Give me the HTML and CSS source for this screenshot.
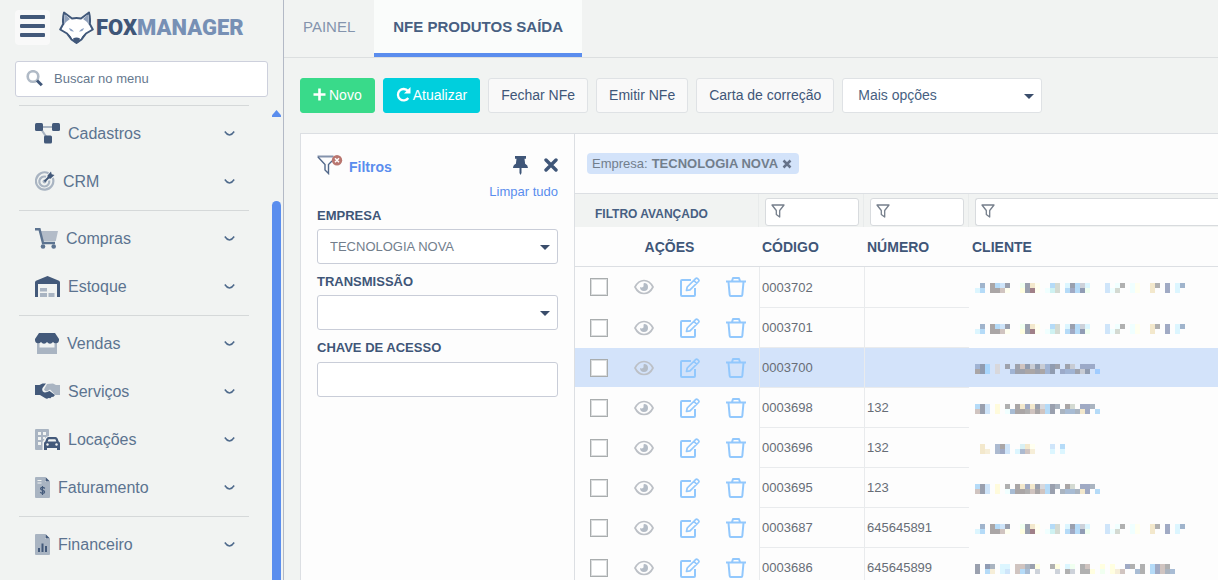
FILE: index.html
```html
<!DOCTYPE html>
<html lang="pt-BR">
<head>
    <meta charset="UTF-8">
    <meta name="viewport" content="width=device-width, initial-scale=1.0">
    <title>FoxManager - NFe Produtos Saída</title>
    <link rel="stylesheet" href="styles.css">
</head>
<body>

    <!-- shared icons -->
    <svg class="sprite" aria-hidden="true">
        <symbol id="chevron" viewBox="0 0 11 7"><path d="M.8 1.500q2.200 3.300 4.700 3.500Q8 4.800 10.200 1.500" fill="none" stroke="#4f6a8c" stroke-width="1.500"/></symbol>
        <symbol id="funnel" viewBox="0 0 14 14"><path d="M1 1h12L8.700 6.500V13L5.300 10.500v-4z" fill="none" stroke="#767f8c" stroke-width="1.300" stroke-linejoin="round"/></symbol>
        <symbol id="eye" viewBox="0 0 20 16">
            <path d="M1 8C3 4 6.200 1.500 10 1.500S17 4 19 8c-2 4-5.200 6.500-9 6.500S3 12 1 8z" fill="none" stroke="#bcc0c6" stroke-width="1.700"/>
            <path d="M10 4a4 4 0 1 1-4 4c.4.500 2.600.600 3.300-.3C10 6.800 9 5 10 4z" fill="#b4bcc6"/>
        </symbol>
        <symbol id="edit" viewBox="0 0 20 20" fill="none" stroke="#92c8fd">
            <path d="M11 3H2Q1 3 1 4v14q0 1 1 1h12q1 0 1-1v-7" stroke-width="2"/>
            <path d="M6.500 13.500l.7-3.500L15.600 1.600q1-1 2 0l.9.9q1 1 0 2L10 12.900zM14 3.500l2.800 2.800" stroke-width="1.700" stroke-linejoin="round"/>
        </symbol>
        <symbol id="trash" viewBox="0 0 20 20" fill="none" stroke="#92c8fd" stroke-width="2">
            <path d="M0 4.500h20M6 4l1-3h6l1 3M2.500 5l1.200 13q.1 1 1 1h10.600q.9 0 1-1L17.500 5" stroke-linejoin="round"/>
        </symbol>

        <!-- masked customer names, one unit per block -->
        <symbol id="mask-a" viewBox="0 0 42 2">
            <path fill="#a0b4cc" d="M1 0h1v1h-1zM41 0h1v1h-1z"/>
            <path fill="#aaa6a6" d="M3 0h1v1h1v1h-2z"/>
            <path fill="#b5dbf8" d="M4 0h1v1h-1zM1 1h1v1h-1zM15 0h1v1h-1zM18 1h1v1h-1zM20 0h1v2h-1z"/>
            <path fill="#cfe5fa" d="M5 0h1v1h-1zM26 0h1v2h-1z"/>
            <path fill="#9aa0ae" d="M6 0h1v1h-1zM10 0h1v2h-1zM19 0h1v1h-1z"/>
            <path fill="#d0c4c0" d="M5 1h1v1h-1z"/>
            <path fill="#f3e8cc" d="M11 0h1v1h-1zM35 0h1v2h-1z"/>
            <path fill="#a08088" d="M11 1h1v1h-1z"/>
            <path fill="#d4dad2" d="M16 0h1v2h-1zM28 1h1v1h-1z"/>
            <path fill="#cff2f2" d="M15 1h1v1h-1z"/>
            <path fill="#cdd2da" d="M21 0h1v1h-1z"/>
            <path fill="#909cb4" d="M21 1h1v1h-1z"/>
            <path fill="#a0aac4" d="M19 1h1v1h-1zM38 0h1v2h-1z"/>
            <path fill="#b0b0b0" d="M29 0h1v1h-1zM36 0h1v1h-1z"/>
            <path fill="#dcf6ff" d="M0 1h1v1h-1zM18 0h1v1h-1zM22 0h1v1h-1zM40 0h1v2h-1z"/>
            <path fill="#f0ffff" d="M14 1h1v1h-1zM27 1h1v1h-1zM28 0h1v1h-1zM31 0h1v2h-1z"/>
            <path fill="#fffff0" d="M6 1h1v1h-1zM12 0h1v2h-1zM32 0h1v2h-1z"/>
            <path fill="#fffee0" d="M9 1h1v1h-1z"/>
            <path fill="#f0fff0" d="M9 0h1v1h-1zM22 1h1v1h-1z"/>
        </symbol>
        <symbol id="mask-b" viewBox="0 0 42 2">
            <path fill="#b5dbf8" d="M0 0h1v1h-1zM14 0h1v2h-1zM24 1h1v1h-1z"/>
            <path fill="#9aa0ae" d="M1 0h1v2h-1zM12 0h1v1h-1zM15 0h1v2h-1z"/>
            <path fill="#cfe5fa" d="M2 0h1v2h-1z"/>
            <path fill="#fffbdc" d="M4 0h1v2h-1z"/>
            <path fill="#b0b0b0" d="M6 0h1v1h-1zM10 1h1v1h-1z"/>
            <path fill="#f0ffff" d="M6 1h1v1h-1z"/>
            <path fill="#aaa6a6" d="M8 0h1v1h1v1h-2zM12 1h1v1h-1zM18 0h1v1h-1z"/>
            <path fill="#f3e8cc" d="M9 0h1v1h-1zM11 0h1v1h-1zM21 1h1v1h-1z"/>
            <path fill="#d0c4c0" d="M0 1h1v1h-1zM11 1h1v1h-1zM13 1h1v1h-1z"/>
            <path fill="#a0aac4" d="M10 0h1v1h-1zM21 0h2v1h-2zM22 1h1v1h-1z"/>
            <path fill="#d8d8dc" d="M13 0h1v1h-1z"/>
            <path fill="#aab4c0" d="M16 0h1v1h-1zM17 1h1v1h-1zM20 1h1v1h-1zM23 0h1v1h-1z"/>
            <path fill="#a8bcd4" d="M7 1h1v1h-1zM18 1h2v1h-2z"/>
            <path fill="#d4dad2" d="M19 0h1v1h-1z"/>
        </symbol>
        <symbol id="mask-c" viewBox="0 0 42 2">
            <path fill="#a0b4d4" d="M0 0h1v1h-1zM7 1h1v1h-1zM14 0h1v2h-1zM18 1h2v1h-2z"/>
            <path fill="#909cb0" d="M1 0h1v2h-1zM10 0h1v1h-1zM12 0h1v1h-1zM15 0h1v2h-1zM22 1h1v1h-1z"/>
            <path fill="#a8d6fd" d="M2 0h1v2h-1z"/>
            <path fill="#d8d8dc" d="M4 0h1v2h-1z"/>
            <path fill="#9ea2ac" d="M6 0h1v1h-1zM8 0h1v1h1v1h-2zM12 1h1v1h-1zM16 0h1v1h-1zM18 0h1v1h-1zM20 1h1v1h-1z"/>
            <path fill="#aaa6a6" d="M0 1h1v1h-1zM10 1h2v1h-2zM13 1h1v1h-1z"/>
            <path fill="#d0c4c0" d="M9 0h1v1h-1z"/>
            <path fill="#c8ccd4" d="M11 0h1v1h-1zM13 0h1v1h-1zM19 0h1v1h-1zM21 1h1v1h-1z"/>
            <path fill="#9caac8" d="M17 1h1v1h-1zM21 0h3v1h-3z"/>
            <path fill="#a0ccff" d="M24 1h1v1h-1z"/>
        </symbol>
        <symbol id="mask-d" viewBox="0 0 42 2">
            <path fill="#f3e8cc" d="M1 0h1v2h-1zM10 0h1v1h-1z"/>
            <path fill="#f6eed8" d="M2 1h1v1h-1zM11 1h1v1h-1z"/>
            <path fill="#acbad0" d="M4 0h1v2h-1zM9 1h1v1h-1z"/>
            <path fill="#aaa6a6" d="M5 0h1v1h-1z"/>
            <path fill="#a0aac4" d="M5 1h1v1h-1z"/>
            <path fill="#cfe5fa" d="M6 0h1v2h-1zM15 0h1v1h-1z"/>
            <path fill="#d8f0f4" d="M9 0h1v1h-1z"/>
            <path fill="#d0c4c0" d="M10 1h1v1h-1z"/>
            <path fill="#fffff0" d="M11 0h1v1h-1z"/>
            <path fill="#b5dbf8" d="M17 0h1v1h-1z"/>
            <path fill="#dcf6ff" d="M8 1h1v1h-1zM15 1h1v1h-1zM17 1h1v1h-1z"/>
        </symbol>
        <symbol id="mask-e" viewBox="0 0 42 2">
            <path fill="#9aa0ae" d="M0 0h1v2h-1zM11 0h1v1h-1z"/>
            <path fill="#909cb4" d="M2 0h1v1h-1z"/>
            <path fill="#aab4c0" d="M3 0h1v1h-1zM10 0h1v1h-1zM38 1h1v1h-1z"/>
            <path fill="#b5dbf8" d="M2 1h1v1h-1zM9 1h1v1h-1zM35 0h1v2h-1z"/>
            <path fill="#f6eed8" d="M3 1h1v1h-1zM28 1h1v1h-1z"/>
            <path fill="#dcf6ff" d="M5 0h2v1h-1v1h-1zM18 0h1v1h-1z"/>
            <path fill="#cfe5fa" d="M6 1h1v1h-1z"/>
            <path fill="#d0c4c0" d="M8 0h2v1h-1v1h-1zM22 0h1v1h-1zM29 1h1v1h-1zM37 0h1v2h-1z"/>
            <path fill="#a8bcd4" d="M10 1h1v1h-1zM32 1h1v1h-1zM39 1h1v1h-1z"/>
            <path fill="#cdd2da" d="M12 1h1v1h-1zM16 1h1v1h-1zM19 1h1v1h-1z"/>
            <path fill="#b0b0b0" d="M15 0h1v1h-1zM18 1h1v1h-1zM21 0h1v2h-1zM22 1h1v1h-1zM31 0h1v1h-1zM33 0h1v2h-1zM38 0h1v1h-1z"/>
            <path fill="#fffee0" d="M12 0h1v1h-1zM16 0h1v1h-1zM23 1h1v1h-1zM25 0h1v1h-1zM27 0h1v2h-1z"/>
            <path fill="#f0fff0" d="M19 0h1v1h-1zM25 1h1v1h-1z"/>
            <path fill="#a0aac4" d="M30 0h1v1h-1zM36 0h1v2h-1z"/>
        </symbol>
    </svg>

    <aside class="sidebar">
        <div class="brand">
            <button class="menu-toggle" type="button" aria-label="Menu">
                <span></span><span></span><span></span>
            </button>
            <a class="logo" href="#">
                <svg width="35" height="33" viewBox="0 0 35 33" aria-hidden="true">
                    <path d="M5 1.500Q3.500 7 4.200 13L1.200 18.500 8 22.500l4.500 6 5 3.500 5-3.500 4.500-6 6.800-4-3-5.500Q31.500 7 30 1.500L22 7.500q-4.500-1-9 0z" fill="#fff" stroke="#41587a" stroke-width="2" stroke-linejoin="round"/>
                    <path d="M5.500 3L11 8l-4 3-2 3zM29.500 3L24 8l4 3 2 3z" fill="#8fa0ba"/>
                    <path d="M10 17q3 .5 5 3.500-4 .5-5-3.500zM25 17q-3 .5-5 3.500 4 .5 5-3.500z" fill="#8ba0c2"/>
                    <path d="M8 22.500q3 .5 5 5.500l1.500 2-2-1zM27 22.500q-3 .5-5 5.500l-1.500 2 2-1z" fill="#41587a"/>
                    <path d="M14 27.500q3.500-2 7 0L20 31l-2.500 1.500L15 31z" fill="#41587a"/>
                </svg>
                <span class="logo-fox">FOX</span><span class="logo-manager">MANAGER</span>
            </a>
        </div>

        <label class="menu-search">
            <svg width="17" height="17" viewBox="0 0 17 17" aria-hidden="true">
                <circle cx="7" cy="6.500" r="5.300" fill="none" stroke="#b0bac6" stroke-width="2.600"/>
                <path d="M11 10.500l4.800 4.800" stroke="#41587a" stroke-width="3"/>
            </svg>
            <input type="text" placeholder="Buscar no menu" aria-label="Buscar no menu">
        </label>

        <div class="menu-area">
            <nav class="menu">
                <hr>
                <a href="#">
                    <svg width="25" height="21" viewBox="0 0 25 21"><path d="M7 4h11M6 6l6 9" stroke="#a9b4c2" stroke-width="2.200" fill="none"/><g fill="#43597a"><rect width="8" height="8" rx="1.500"/><rect x="17" width="8" height="8" rx="1.500"/><rect x="9" y="12.500" width="8" height="8" rx="1.500"/></g></svg>
                    <span>Cadastros</span><svg class="chevron"><use href="#chevron"/></svg>
                </a>
                <a href="#">
                    <svg width="20" height="20" viewBox="0 0 20 20"><g fill="none" stroke="#a9b4c2" stroke-width="2.200"><path d="M13.500 2.200A8.700 8.700 0 1 0 17.800 7"/><path d="M11 5.800a5 5 0 1 0 3.200 3.700"/></g><circle cx="9.500" cy="10.500" r="2" fill="#a9b4c2"/><path d="M9.500 10.500l5-5" stroke="#43597a" stroke-width="2"/><path d="M12.500 4.500L16 .5l.7 2.800 2.800.7-4 3.700-2.800-.4z" fill="#43597a"/></svg>
                    <span>CRM</span><svg class="chevron"><use href="#chevron"/></svg>
                </a>
                <hr>
                <a href="#">
                    <svg width="23" height="21" viewBox="0 0 23 21"><path d="M5.500 3H23l-2.200 10H7.500z" fill="#b3bcc8"/><path d="M0 1.300h4.500L8 15h12" fill="none" stroke="#5c7390" stroke-width="2.400"/><circle cx="8" cy="18.500" r="2.300" fill="#5c7390"/><circle cx="18.700" cy="18.500" r="2.300" fill="#5c7390"/></svg>
                    <span>Compras</span><svg class="chevron"><use href="#chevron"/></svg>
                </a>
                <a href="#">
                    <svg width="25" height="21" viewBox="0 0 25 21"><path d="M0 21V6.500q0-1.200 1-1.700L12.500 0 24 4.800q1 .5 1 1.700V21h-3V8H3v13z" fill="#43597a"/><path d="M5 12h7v3.500H5zM5 17h7v4H5zM13.500 17h6v4h-6z" fill="#a9b4c2"/></svg>
                    <span>Estoque</span><svg class="chevron"><use href="#chevron"/></svg>
                </a>
                <hr>
                <a href="#">
                    <svg width="24" height="21" viewBox="0 0 24 21"><path d="M2 9h2.500v5.500h15V9H22v12H2z" fill="#a9b4c2"/><path d="M4 0h16l4 6q.3 4-3 4.200-2 .1-3-1.200-1.200 1.700-3 1.700T12 9q-1.200 1.700-3 1.700T6 9q-1 1.300-3 1.200Q-.3 10 0 6z" fill="#43597a"/></svg>
                    <span>Vendas</span><svg class="chevron"><use href="#chevron"/></svg>
                </a>
                <a href="#">
                    <svg width="25" height="16" viewBox="0 0 25 16"><path d="M12 1l6-.5L21 2h4v10h-4.500L15 6.500 12.500 8q-2.500 1-3.500-1.500z" fill="#a9b4c2"/><path d="M0 2h4.500L7.500.5h3.500L7.500 5q-1 3.500 1.500 4.300 2.500.4 5.500-1.300l5.500 4-1.500 1.800-2 .2-1 1.300-2-.3Q12 16.500 10 15l-5-3H0z" fill="#43597a"/></svg>
                    <span>Serviços</span><svg class="chevron"><use href="#chevron"/></svg>
                </a>
                <a href="#">
                    <svg width="25" height="21" viewBox="0 0 25 21"><path d="M1 0h12q1 0 1 1v6q-3.500.3-4.500 3L7.500 13v8H1q-1 0-1-1V1q0-1 1-1z" fill="#a9b4c2"/><path d="M3 3h3v3H3zM8 3h3v3H8zM3 8h3v3H3zM8 8h2v2H8zM3 13h3v3H3z" fill="#f1f3f2"/><path d="M13.500 8h7q1.500 0 2.200 1.700l1 2.800q1.300.5 1.300 2V21h-3v-2H12v2H9v-6.500q0-1.500 1.300-2l1-2.800Q12 8 13.500 8z" fill="#43597a"/><path d="M14 10.200h6q.6 0 .9 1l.4 1.300h-8.600l.4-1.300q.3-1 .9-1z" fill="#f1f3f2"/><circle cx="12.500" cy="15.500" r="1.200" fill="#f1f3f2"/><circle cx="21.500" cy="15.500" r="1.200" fill="#f1f3f2"/></svg>
                    <span>Locações</span><svg class="chevron"><use href="#chevron"/></svg>
                </a>
                <a href="#">
                    <svg width="15" height="21" viewBox="0 0 15 21"><path d="M1 0h9v5h5v15q0 1-1 1H1q-1 0-1-1V1q0-1 1-1z" fill="#a9b4c2"/><path d="M10.500 0L15 4.500h-4.500z" fill="#43597a"/><path d="M2.500 3.500h4M2.500 6h4" stroke="#f1f3f2"/><path d="M9.800 11.500q-1-1.200-2.500-1.100-1.700.1-1.700 1.400 0 1.100 2 1.500t2 1.600q0 1.400-2 1.400-1.500 0-2.400-1.200M7.500 9v9" fill="none" stroke="#43597a" stroke-width="1.200"/></svg>
                    <span>Faturamento</span><svg class="chevron"><use href="#chevron"/></svg>
                </a>
                <hr>
                <a href="#">
                    <svg width="15" height="21" viewBox="0 0 15 21"><path d="M1 0h9v5h5v15q0 1-1 1H1q-1 0-1-1V1q0-1 1-1z" fill="#a9b4c2"/><path d="M10.500 0L15 4.500h-4.500zM3 14h2v4H3zM6.500 9.500h2V18h-2zM10 12h2v6h-2z" fill="#43597a"/></svg>
                    <span>Financeiro</span><svg class="chevron"><use href="#chevron"/></svg>
                </a>
            </nav>
            <div class="scroll-track">
                <div class="scroll-up"></div>
                <div class="scroll-thumb"></div>
            </div>
        </div>
    </aside>

    <main class="content">
        <nav class="tabs">
            <a href="#">PAINEL</a>
            <a href="#" class="active">NFE PRODUTOS SAÍDA</a>
        </nav>

        <div class="toolbar">
            <button class="btn btn-new" type="button">
                <svg width="13" height="13" viewBox="0 0 13 13" aria-hidden="true"><path d="M6.500 .5v12M.5 6.500h12" stroke="#fff" stroke-width="2.600"/></svg>
                Novo
            </button>
            <button class="btn btn-refresh" type="button">
                <svg width="15" height="15" viewBox="0 0 15 15" aria-hidden="true"><path d="M12 4A5.700 5.700 0 1 0 12.300 11" fill="none" stroke="#fff" stroke-width="2.300"/><path d="M14.500 0v6.500H8z" fill="#fff"/></svg>
                Atualizar
            </button>
            <button class="btn" type="button">Fechar NFe</button>
            <button class="btn" type="button">Emitir NFe</button>
            <button class="btn" type="button">Carta de correção</button>
            <div class="select more-options">
                <select aria-label="Mais opções"><option>Mais opções</option></select>
            </div>
        </div>

        <div class="panel">
            <section class="filters">
                <div class="filters-head">
                    <svg width="26" height="20" viewBox="0 0 26 20" aria-hidden="true"><path d="M.5 1.500h16" stroke="#8493ac" stroke-width="2"/><path d="M1 2l7 7.500V15l3.500 3.500v-9L15 6" fill="none" stroke="#52688a" stroke-width="1.400"/><circle cx="20" cy="5.300" r="5.200" fill="#b9766f"/><path d="M18 3.300l4 4M22 3.300l-4 4" stroke="#fff" stroke-width="1.500"/></svg>
                    <h2>Filtros</h2>
                    <button class="icon-btn" type="button" aria-label="Fixar">
                        <svg width="15" height="19" viewBox="0 0 15 19"><path d="M2 0h11v2.700h-1.500l.6 5Q15 9 15 12H8.500v5L7.500 19l-1-2v-5H0q0-3 2.900-4.300l.6-5H2z" fill="#3f5678"/></svg>
                    </button>
                    <button class="icon-btn" type="button" aria-label="Fechar">
                        <svg width="14" height="14" viewBox="0 0 14 14"><path d="M2 2l10 10M12 2L2 12" stroke="#3f5678" stroke-width="3.400" stroke-linecap="round"/></svg>
                    </button>
                </div>
                <a class="clear" href="#">Limpar tudo</a>

                <label for="empresa">EMPRESA</label>
                <div class="select">
                    <select id="empresa"><option>TECNOLOGIA NOVA</option></select>
                </div>
                <label for="transmissao">TRANSMISSÃO</label>
                <div class="select">
                    <select id="transmissao"><option></option></select>
                </div>
                <label for="chave">CHAVE DE ACESSO</label>
                <input id="chave" type="text">
            </section>

            <section class="results">
                <div class="chips">
                    <span class="chip">Empresa: <b>TECNOLOGIA NOVA</b>
                        <button class="icon-btn" type="button" aria-label="Remover filtro">
                            <svg width="10" height="10" viewBox="0 0 10 10"><path d="M1.500 1.500l7 7M8.500 1.500l-7 7" stroke="#66738a" stroke-width="2.500"/></svg>
                        </button>
                    </span>
                </div>

                <table>
                    <colgroup>
                        <col class="col-actions">
                        <col class="col-code">
                        <col class="col-code">
                        <col>
                    </colgroup>
                    <thead>
                        <tr class="filter-row">
                            <th>FILTRO AVANÇADO</th>
                            <td><label class="cell-filter"><svg><use href="#funnel"/></svg><input type="text" aria-label="Filtrar código"></label></td>
                            <td><label class="cell-filter"><svg><use href="#funnel"/></svg><input type="text" aria-label="Filtrar número"></label></td>
                            <td><label class="cell-filter wide"><svg><use href="#funnel"/></svg><input type="text" aria-label="Filtrar cliente"></label></td>
                        </tr>
                        <tr class="title-row">
                            <th>AÇÕES</th>
                            <th>CÓDIGO</th>
                            <th>NÚMERO</th>
                            <th>CLIENTE</th>
                        </tr>
                    </thead>
                    <tbody>
                        <tr>
                            <td><div class="actions">
                                <input type="checkbox" aria-label="Selecionar 0003702">
                                <button type="button" aria-label="Ver"><svg class="eye"><use href="#eye"/></svg></button>
                                <button type="button" aria-label="Editar"><svg><use href="#edit"/></svg></button>
                                <button type="button" aria-label="Excluir"><svg><use href="#trash"/></svg></button>
                            </div></td>
                            <td>0003702</td><td></td><td><svg class="mask"><use href="#mask-a"/></svg></td>
                        </tr>
                        <tr>
                            <td><div class="actions">
                                <input type="checkbox" aria-label="Selecionar 0003701">
                                <button type="button" aria-label="Ver"><svg class="eye"><use href="#eye"/></svg></button>
                                <button type="button" aria-label="Editar"><svg><use href="#edit"/></svg></button>
                                <button type="button" aria-label="Excluir"><svg><use href="#trash"/></svg></button>
                            </div></td>
                            <td>0003701</td><td></td><td><svg class="mask"><use href="#mask-a"/></svg></td>
                        </tr>
                        <tr class="selected">
                            <td><div class="actions">
                                <input type="checkbox" aria-label="Selecionar 0003700">
                                <button type="button" aria-label="Ver"><svg class="eye"><use href="#eye"/></svg></button>
                                <button type="button" aria-label="Editar"><svg><use href="#edit"/></svg></button>
                                <button type="button" aria-label="Excluir"><svg><use href="#trash"/></svg></button>
                            </div></td>
                            <td>0003700</td><td></td><td><svg class="mask"><use href="#mask-c"/></svg></td>
                        </tr>
                        <tr>
                            <td><div class="actions">
                                <input type="checkbox" aria-label="Selecionar 0003698">
                                <button type="button" aria-label="Ver"><svg class="eye"><use href="#eye"/></svg></button>
                                <button type="button" aria-label="Editar"><svg><use href="#edit"/></svg></button>
                                <button type="button" aria-label="Excluir"><svg><use href="#trash"/></svg></button>
                            </div></td>
                            <td>0003698</td><td>132</td><td><svg class="mask"><use href="#mask-b"/></svg></td>
                        </tr>
                        <tr>
                            <td><div class="actions">
                                <input type="checkbox" aria-label="Selecionar 0003696">
                                <button type="button" aria-label="Ver"><svg class="eye"><use href="#eye"/></svg></button>
                                <button type="button" aria-label="Editar"><svg><use href="#edit"/></svg></button>
                                <button type="button" aria-label="Excluir"><svg><use href="#trash"/></svg></button>
                            </div></td>
                            <td>0003696</td><td>132</td><td><svg class="mask"><use href="#mask-d"/></svg></td>
                        </tr>
                        <tr>
                            <td><div class="actions">
                                <input type="checkbox" aria-label="Selecionar 0003695">
                                <button type="button" aria-label="Ver"><svg class="eye"><use href="#eye"/></svg></button>
                                <button type="button" aria-label="Editar"><svg><use href="#edit"/></svg></button>
                                <button type="button" aria-label="Excluir"><svg><use href="#trash"/></svg></button>
                            </div></td>
                            <td>0003695</td><td>123</td><td><svg class="mask"><use href="#mask-b"/></svg></td>
                        </tr>
                        <tr>
                            <td><div class="actions">
                                <input type="checkbox" aria-label="Selecionar 0003687">
                                <button type="button" aria-label="Ver"><svg class="eye"><use href="#eye"/></svg></button>
                                <button type="button" aria-label="Editar"><svg><use href="#edit"/></svg></button>
                                <button type="button" aria-label="Excluir"><svg><use href="#trash"/></svg></button>
                            </div></td>
                            <td>0003687</td><td>645645891</td><td><svg class="mask"><use href="#mask-a"/></svg></td>
                        </tr>
                        <tr>
                            <td><div class="actions">
                                <input type="checkbox" aria-label="Selecionar 0003686">
                                <button type="button" aria-label="Ver"><svg class="eye"><use href="#eye"/></svg></button>
                                <button type="button" aria-label="Editar"><svg><use href="#edit"/></svg></button>
                                <button type="button" aria-label="Excluir"><svg><use href="#trash"/></svg></button>
                            </div></td>
                            <td>0003686</td><td>645645899</td><td><svg class="mask"><use href="#mask-e"/></svg></td>
                        </tr>
                    </tbody>
                </table>
            </section>
        </div>
    </main>

</body>
</html>
```

FILE: styles.css
```css
* {
    box-sizing: border-box;
}

body {
    margin: 0;
    height: 100vh;
    display: flex;
    overflow: hidden;
    font-family: "Liberation Sans", Arial, sans-serif;
    font-size: 13px;
    color: #3f5678;
    background-color: #f1f3f2;
}

a {
    color: inherit;
    text-decoration: none;
}

button, input, select {
    font: inherit;
    color: inherit;
}

button {
    cursor: pointer;
}

.sprite {
    display: none;
}

/* sidebar */
.sidebar {
    flex: 0 0 284px;
    display: flex;
    flex-direction: column;
    border-right: 1px solid #b3b9c6;
}

.brand {
    display: flex;
    align-items: center;
    gap: 9px;
    padding: 10px 15px 0;
}

.menu-toggle {
    width: 35px;
    height: 35px;
    display: flex;
    flex-direction: column;
    align-items: center;
    gap: 5px;
    padding: 5px 0;
    border: none;
    border-radius: 4px;
    background-color: #f9f9f9;
}

.menu-toggle span {
    width: 25px;
    height: 4px;
    border-radius: 1px;
    background-color: #43597a;
}

.logo {
    display: flex;
    align-items: center;
    font-family: Roboto, sans-serif;
    font-size: 22px;
    font-weight: 900;
}

.logo svg {
    margin-right: 2px;
}

.logo-fox {
    color: #3f5678;
}

.logo-manager {
    color: #7790b5;
}

.menu-search {
    height: 36px;
    display: flex;
    align-items: center;
    gap: 11px;
    margin: 16px 15px 0;
    padding: 0 10px 2px;
    border: 1px solid #cdd0dc;
    border-radius: 3px;
    background-color: #fff;
}

.menu-search input {
    flex: 1;
    min-width: 0;
    padding: 0;
    border: none;
    outline: none;
    background: none;
}

.menu-search input::placeholder {
    color: #66788e;
}

.menu-area {
    flex: 1;
    min-height: 0;
    display: flex;
    justify-content: space-between;
    padding: 3px 2px 0 19px;
}

.menu {
    flex: 0 0 230px;
}

.menu hr {
    height: 1px;
    margin: 5px 0 3px;
    border: none;
    background-color: #d5d8d9;
}

.menu a {
    height: 48px;
    display: flex;
    align-items: center;
    gap: 8px;
    padding: 0 14px 0 16px;
    font-size: 16px;
    color: #5c7390;
}

.menu span {
    padding-top: 2px;
}

.menu .chevron {
    width: 11px;
    height: 7px;
    margin-left: auto;
}

.scroll-track {
    width: 9px;
    display: flex;
    flex-direction: column;
    padding-top: 10px;
}

.scroll-up {
    height: 7px;
    background-color: #5a8dee;
    clip-path: polygon(50% 0, 100% 75%, 100% 100%, 0 100%, 0 75%);
}

.scroll-thumb {
    flex: 1;
    margin-top: 84px;
    border-radius: 5px 5px 0 0;
    background-color: #5a8dee;
}

/* tabs and toolbar */
.content {
    flex: 1;
    min-width: 0;
    display: flex;
    flex-direction: column;
}

.tabs {
    display: flex;
    border-bottom: 1px solid #dcdfe0;
}

.tabs a {
    height: 57px;
    padding: 0 19px;
    border-bottom: 4px solid transparent;
    font-size: 15px;
    line-height: 53px;
    color: #8494ad;
}

.tabs .active {
    border-color: #5a8dee;
    font-weight: bold;
    color: #475f82;
    background-color: #fafcfb;
}

.toolbar {
    display: flex;
    gap: 8px;
    padding: 20px 16px;
}

.btn {
    height: 35px;
    display: flex;
    align-items: center;
    gap: 3px;
    padding: 0 12px 2px;
    border: 1px solid #dfe2e5;
    border-radius: 3px;
    font-size: 14px;
    background-color: #f9f9f9;
}

.btn-new {
    border-color: #39da8a;
    color: #fff;
    background-color: #39da8a;
}

.btn-refresh {
    gap: 2px;
    border-color: #00cfdd;
    color: #fff;
    background-color: #00cfdd;
}

.select {
    position: relative;
}

.select select {
    width: 100%;
    height: 35px;
    padding: 0 12px;
    border: 1px solid #c9cdd8;
    border-radius: 3px;
    appearance: none;
    color: #727e8c;
    background-color: #fff;
}

.select::after {
    content: "";
    position: absolute;
    top: 16px;
    right: 8px;
    border: 5px solid transparent;
    border-top-color: #3a4d6b;
    border-bottom: none;
    pointer-events: none;
}

.more-options {
    flex: 0 0 200px;
}

.more-options select {
    padding: 0 15px 2px;
    border-color: #dfe2e5;
    font-size: 14px;
    color: #475f82;
}

/* filters panel */
.panel {
    flex: 1;
    min-height: 0;
    display: flex;
    margin-left: 16px;
    border-top: 1px solid #dcdfe3;
    border-left: 1px solid #dcdfe3;
    background-color: #fdfdfd;
}

.filters {
    flex: 0 0 274px;
    display: flex;
    flex-direction: column;
    padding: 20px 16px;
    border-right: 1px solid #dcdfe3;
}

.filters-head {
    height: 22px;
    display: flex;
    align-items: center;
    gap: 6px;
}

.filters-head h2 {
    flex: 1;
    margin: 4px 0 0;
    font-size: 14px;
    color: #5a8dee;
}

.icon-btn {
    display: flex;
    padding: 0;
    border: none;
    background: none;
}

.filters-head .icon-btn + .icon-btn {
    margin-left: 10px;
}

.clear {
    align-self: flex-end;
    padding-top: 2px;
    line-height: 28px;
    color: #5a8dee;
}

.filters label {
    line-height: 19px;
    font-weight: bold;
}

.filters .select {
    margin: 4px 0 8px;
}

.filters > input {
    height: 35px;
    margin-top: 5px;
    padding: 0 12px;
    border: 1px solid #c9cdd8;
    border-radius: 3px;
    background-color: #fff;
}

/* results */
.results {
    flex: 1;
    min-width: 0;
}

.chips {
    height: 60px;
    display: flex;
    align-items: center;
    padding: 0 12px;
    border-bottom: 1px solid #dcdfe3;
}

.chip {
    height: 21px;
    display: flex;
    align-items: center;
    gap: 4px;
    padding: 0 7px 0 5px;
    border-radius: 4px;
    color: #727e8c;
    background-color: #d3e3fa;
}

table {
    width: 100%;
    table-layout: fixed;
    border-collapse: separate;
    border-spacing: 0;
    color: #676d76;
}

.col-actions {
    width: 184px;
}

.col-code {
    width: 105px;
}

th, td {
    padding: 0 3px;
    text-align: left;
}

.filter-row th, .filter-row td {
    height: 33px;
    padding: 3px 4px 1px 6px;
    border-right: 1px solid #e8ebeb;
    background-color: #f1f3f2;
}

.filter-row th {
    padding: 6px 20px 0;
    font-size: 12px;
    color: #475f82;
}

.filter-row td:last-child {
    padding-right: 0;
    border-right: none;
}

.cell-filter {
    height: 28px;
    display: flex;
    align-items: center;
    padding: 0 5px 2px;
    border: 1px solid #d8dbde;
    border-radius: 3px;
    background-color: #fff;
}

.cell-filter.wide {
    border-right: none;
    border-radius: 3px 0 0 3px;
}

.cell-filter svg {
    flex: none;
    width: 14px;
    height: 14px;
}

.cell-filter input {
    flex: 1;
    min-width: 0;
    padding: 0;
    border: none;
    outline: none;
    background: none;
}

.title-row th {
    height: 40px;
    border-bottom: 1px solid #dcdfe3;
    font-size: 14px;
    color: #3f5678;
}

.title-row th:first-child {
    padding-left: 8px;
    text-align: center;
}

tbody td {
    height: 40px;
    border-bottom: 1px solid #e9ebed;
}

tbody tr:first-child td {
    height: 41px;
}

tbody td:nth-child(2), tbody td:nth-child(3) {
    border-left: 1px solid #e9ebed;
    padding: 0 2px;
}

tbody td:first-child, tbody td:last-child {
    border-bottom-color: transparent;
}

tbody td:last-child {
    padding: 2px 0 0 6px;
}

.selected td {
    background-color: #d3e3fa;
    background-clip: padding-box;
}

.actions {
    display: flex;
    align-items: center;
    gap: 26px;
    padding-left: 12px;
}

.actions input {
    width: 18px;
    height: 18px;
    margin: 0;
    border: 1px solid #a9adae;
    outline: 1px solid #dcdedf;
    outline-offset: -2px;
    appearance: none;
    background-color: #fff;
}

.actions button {
    display: flex;
    padding: 0;
    border: none;
    background: none;
}

.actions svg {
    width: 20px;
    height: 20px;
}

.actions .eye {
    height: 16px;
}

.mask {
    display: block;
    width: 210px;
    height: 10px;
    shape-rendering: crispEdges;
}
```
